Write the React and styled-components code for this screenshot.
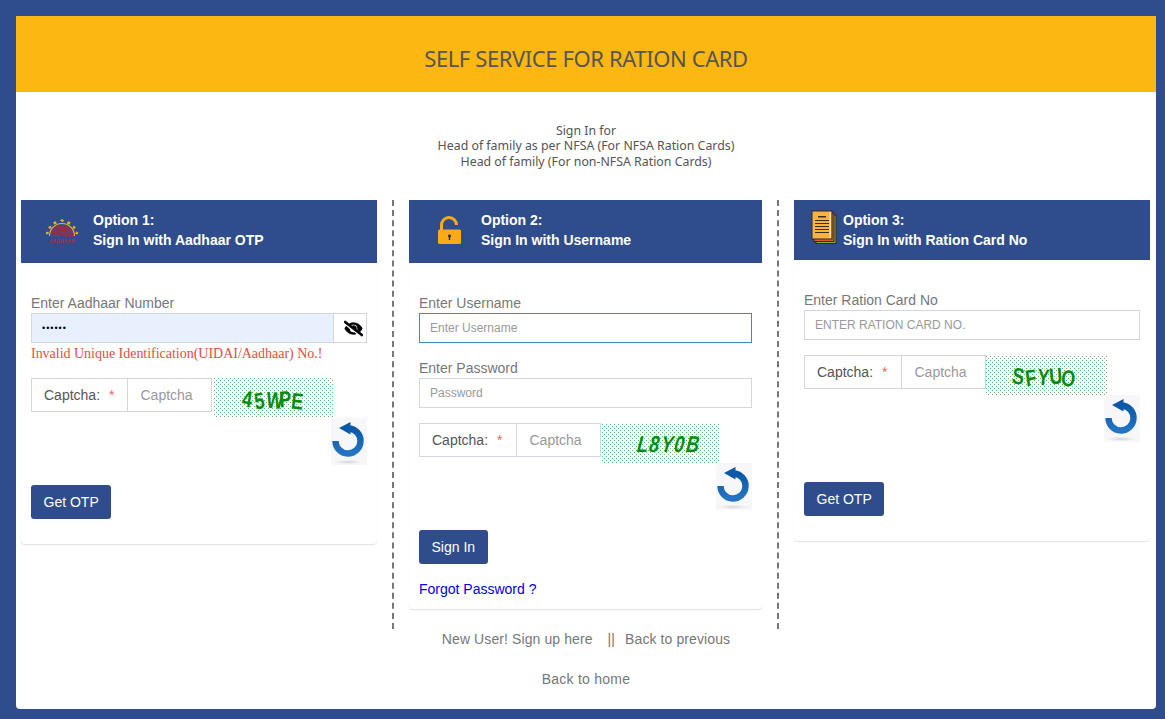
import React from "react";
import styled, { createGlobalStyle } from "styled-components";
import { FaEyeSlash } from "react-icons/fa";

const Global = createGlobalStyle`
  html, body { margin: 0; padding: 0; background: #2f4d8d; }
  * { box-sizing: border-box; }
  body { font-family: "Liberation Sans", Arial, sans-serif; }
`;

const Page = styled.div`
  width: 1165px;
  height: 719px;
  padding: 16px 9px 10px 16px;
  background: #2f4d8d;
  overflow: hidden;
`;
const Sheet = styled.main`
  height: 693px;
  background: #fff;
  border-radius: 0 0 4px 4px;
`;
const Banner = styled.header`
  height: 76px;
  background: #fcb711;
  display: flex;
  align-items: center;
  justify-content: center;
  padding-top: 8px;
`;
const Title = styled.h1`
  margin: 0;
  font: 400 22px/1 "Noto Sans", sans-serif;
  color: #555;
  letter-spacing: -0.4px;
`;
const Intro = styled.p`
  margin: 0;
  height: 108px;
  padding-top: 30.5px;
  text-align: center;
  font: 400 12.35px/15.5px "Noto Sans", sans-serif;
  color: #555;
`;
const Columns = styled.div`
  display: flex;
  height: 429px;
  padding-left: 5px;
`;
const Divider = styled.div`
  width: 2px;
  margin: 0 15px;
  border-left: 2px dashed #777;
`;
const Panel = styled.section`
  width: ${(p) => p.$w}px;
  align-self: flex-start;
  background: #fff;
  border-radius: 0 0 4px 4px;
  box-shadow: 0 1px 1px rgba(0, 0, 0, 0.12), 0 0 1px rgba(0, 0, 0, 0.03);
`;
const PanelHead = styled.div`
  height: ${(p) => p.$h}px;
  padding-bottom: ${(p) => p.$pb || 0}px;
  background: #2f4d8d;
  display: flex;
  align-items: center;
`;
const IconSlot = styled.div`
  width: ${(p) => p.$w}px;
  display: flex;
  padding-left: ${(p) => p.$pad}px;
  padding-top: ${(p) => p.$pt || 0}px;
  padding-bottom: ${(p) => p.$ib || 0}px;
  flex: none;
`;
const HeadText = styled.div`
  color: #fff;
  font-size: 14px;
  font-weight: 700;
  line-height: 20px;
`;
const PanelBody = styled.div`
  padding: 30px 10px 10px;
`;
const Field = styled.div`
  margin-bottom: 15px;
`;
const Label = styled.label`
  display: block;
  font-size: 14px;
  line-height: 20px;
  color: #777;
`;
const Input = styled.input`
  display: block;
  width: 100%;
  height: 30px;
  padding: 0 10px;
  border: 1px solid ${(p) => (p.$focus ? "#3c8dbc" : "#d2d6de")};
  background: #fff;
  font: 12px "Liberation Sans", Arial, sans-serif;
  color: #555;
  outline: none;
  &::placeholder { color: #999; opacity: 1; }
`;
const PassRow = styled.div`
  display: flex;
  height: 30px;
`;
const PassInput = styled(Input)`
  flex: 1;
  background: #e8f0fe;
  border-right: 0;
  color: #000;
  font-size: 9px;
  letter-spacing: 1px;
`;
const EyeBox = styled.div`
  width: 34px;
  border: 1px solid #d2d6de;
  display: flex;
  align-items: center;
  justify-content: center;
  padding-left: 6px;
  color: #000;
  font-size: 19px;
  svg { stroke: #000; stroke-width: 28; }
`;
const ErrorText = styled.div`
  height: 20px;
  padding-top: 1px;
  font: 14px/20px "Liberation Serif", serif;
  color: #e04f3f;
  letter-spacing: -0.02px;
`;
const CaptchaRow = styled.div`
  display: flex;
  flex-wrap: wrap;
  align-items: flex-start;
  margin-bottom: ${(p) => p.$after}px;
`;
const CaptchaGroup = styled.div`
  display: flex;
  width: ${(p) => p.$w}px;
  height: 34px;
  border: 1px solid #d2d6de;
  margin-right: ${(p) => p.$gap || 0}px;
  font-size: 14px;
`;
const CaptchaLabel = styled.div`
  flex: 1;
  padding-left: 12px;
  line-height: 32px;
  color: #555;
  border-right: 1px solid #d2d6de;
`;
const Star = styled.span`
  color: #f0655a;
  margin-left: 9px;
`;
const CaptchaInput = styled.input`
  flex: none;
  width: 83px;
  border: 0;
  padding: 0 12.5px;
  font: 14px "Liberation Sans", Arial, sans-serif;
  outline: none;
  background: transparent;
  &::placeholder { color: #999; opacity: 1; }
`;
const CaptchaImage = styled.div`
  position: relative;
  width: ${(p) => p.$w}px;
  height: 40px;
  display: flex;
  align-items: center;
  justify-content: center;
  padding: 4px ${(p) => p.$right || 0}px 0 ${(p) => p.$left || 0}px;
`;
const CaptchaDots = styled.svg`
  position: absolute;
  inset: 0;
  width: 100%;
  height: 100%;
`;
const CaptchaChar = styled.span`
  position: relative;
  display: inline-block;
  font: ${(p) => (p.$italic ? "italic 700" : "700")} 23px/1 "Liberation Sans", sans-serif;
  color: #0a8a14;
  width: 12.3px;
  text-align: center;
  transform: translateY(${(p) => p.$y}px) rotate(${(p) => p.$r}deg) scaleX(0.78)
    skewX(${(p) => (p.$italic ? -8 : 0)}deg);
`;
const RefreshBox = styled.div`
  width: 36px;
  height: 47px;
  margin-left: auto;
  background: #f7f7fa;
`;
const Button = styled.button`
  display: block;
  height: 34px;
  padding: 0 12.5px;
  margin-bottom: 15px;
  border: 0;
  border-radius: 3px;
  background: #2f4d8d;
  color: #fff;
  font: 14px "Liberation Sans", Arial, sans-serif;
`;
const ForgotLink = styled.a`
  display: block;
  font-size: 14px;
  line-height: 20px;
  color: #0000ee;
`;
const FooterRow = styled.div`
  display: flex;
  justify-content: center;
  font-size: 14px;
  line-height: 20px;
  color: #777;
  margin-bottom: 20px;
  letter-spacing: ${(p) => p.$ls}px;
`;
const Bars = styled.span`
  margin: 0 10px 0 15px;
`;

const AadhaarIcon = () => (
  <svg width="34" height="25" viewBox="0 0 34 25">
    <g fill="#f2b01e">
      <path d="M15 1.5l2-1.5 2.4 1.8-2.2 1.2z" />
      <path d="M8 3.2l2.8-1 1 2.6-2.4.8z" />
      <path d="M22.8 2.2l2.8 1-1.2 2.6-2.4-1z" />
      <path d="M3.2 8l2.4-1.2 1.2 2-2.4 1.2z" />
      <path d="M28.5 6.8l2.4 1.2-1.7 2.2-1.7-1.2z" />
      <path d="M0.8 13.5l2.4-1 .7 2.2-2.6.7z" />
      <path d="M31 12.5l2.4 1-1 1.9-2-.7z" />
    </g>
    <g fill="none" stroke="#b5263f" strokeWidth="1.2">
      <path d="M4.5 17a12.5 12.5 0 0 1 25 0" stroke="#f2b01e" />
      <path d="M6.5 17.5a10.5 10.5 0 0 1 21 0" />
      <path d="M8.5 17.5a8.5 8.5 0 0 1 17 0" />
      <path d="M10.5 17.5a6.5 6.5 0 0 1 13 0" />
      <path d="M12.5 17.5a4.5 4.5 0 0 1 9 0" />
      <path d="M14.5 17.5a2.5 2.5 0 0 1 5 0" />
    </g>
    <text x="17" y="24" textAnchor="middle" fontFamily="Liberation Sans" fontWeight="700" fontSize="5.2" fill="#b5263f">AADHAAR</text>
  </svg>
);
const LockIcon = () => (
  <svg width="23" height="28" viewBox="0 0 23 28">
    <path d="M3.5 14V9A7.5 7.5 0 0 1 18.5 9" fill="none" stroke="#fbab18" strokeWidth="3" />
    <rect x="0" y="13.5" width="23" height="14.5" rx="1.5" fill="#fbab18" />
    <circle cx="11.5" cy="20" r="1.4" fill="#222" />
    <rect x="10.8" y="20" width="1.4" height="4" fill="#222" />
  </svg>
);
const DocsIcon = () => (
  <svg width="26" height="34" viewBox="0 0 26 34">
    <rect x="5" y="5" width="20" height="28.5" fill="#7cb342" stroke="#2b2b2b" />
    <rect x="3" y="3" width="20" height="28.5" fill="#e4572e" stroke="#2b2b2b" />
    <rect x="1" y="1" width="20" height="28" fill="#fcb040" stroke="#2b2b2b" />
    <rect x="18.5" y="2" width="1.5" height="26" fill="#ffe0a0" />
    <g fill="#3a2e1a">
      <rect x="7" y="6" width="8" height="1.5" />
      <rect x="4" y="10" width="14" height="1" />
      <rect x="4" y="13" width="14" height="1" />
      <rect x="4" y="16" width="14" height="1" />
      <rect x="4" y="19" width="14" height="1" />
      <rect x="4" y="22" width="14" height="1" />
    </g>
  </svg>
);
const RefreshIcon = ({ id }) => (
  <RefreshBox>
    <svg width="36" height="47" viewBox="0 0 36 47" style={{ display: "block" }}>
      <defs>
        <linearGradient id={id} x1="0" y1="0" x2="0" y2="1">
          <stop offset="0" stopColor="#0c58a8" />
          <stop offset="1" stopColor="#2474c4" />
        </linearGradient>
        <radialGradient id={id + "s"}>
          <stop offset="0" stopColor="#000" stopOpacity="0.13" />
          <stop offset="1" stopColor="#000" stopOpacity="0" />
        </radialGradient>
      </defs>
      <ellipse cx="17.5" cy="44" rx="15" ry="2.2" fill={`url(#${id}s)`} />
      <path d="M18 10.5A12.5 12.5 0 1 1 4.5 23" fill="none" stroke={`url(#${id})`} strokeWidth="6.4" />
      <path d="M8 10L19.5 4V16.5Z" fill="#0c58a8" />
    </svg>
  </RefreshBox>
);
const CAPTCHA_MOTION = [
  [-1, 8], [1, -8], [0, 5], [-1, -5], [1, 6],
];
const Captcha = ({ id, text, w, italic, left, right, dotX = 0, dotY = 0 }) => (
  <CaptchaImage $w={w} $left={left} $right={right}>
    <CaptchaDots aria-hidden="true" shapeRendering="crispEdges">
      <defs>
        <pattern id={id + "d"} width="4" height="4" patternUnits="userSpaceOnUse" patternTransform={`translate(${dotX} ${dotY})`}>
          <rect x="0" y="0" width="1" height="1" fill="#5fbb6c" />
          <rect x="2" y="2" width="1" height="1" fill="#5fbb6c" />
        </pattern>
      </defs>
      <rect width="100%" height="100%" fill={`url(#${id}d)`} />
    </CaptchaDots>
    {text.split("").map((c, i) => (
      <CaptchaChar key={i} $italic={italic} $y={italic ? -1 : CAPTCHA_MOTION[i][0]} $r={italic ? 0 : CAPTCHA_MOTION[i][1]}>{c}</CaptchaChar>
    ))}
  </CaptchaImage>
);
const CaptchaBlock = ({ id, text, groupW, gap, imgW, italic, after, left, right, dotX, dotY }) => (
  <CaptchaRow $after={after}>
    <CaptchaGroup $w={groupW} $gap={gap}>
      <CaptchaLabel>Captcha:<Star>*</Star></CaptchaLabel>
      <CaptchaInput placeholder="Captcha" />
    </CaptchaGroup>
    <Captcha id={id} text={text} w={imgW} italic={italic} left={left} right={right} dotX={dotX} dotY={dotY} />
    <RefreshIcon id={id} />
  </CaptchaRow>
);

export default function App() {
  return (
    <Page>
      <Global />
      <Sheet>
        <Banner><Title>SELF SERVICE FOR RATION CARD</Title></Banner>
        <Intro>
          Sign In for<br />
          Head of family as per NFSA (For NFSA Ration Cards)<br />
          Head of family (For non-NFSA Ration Cards)
        </Intro>
        <Columns>
          <Panel $w={356}>
            <PanelHead $h={63} $pb={3}>
              <IconSlot $w={72} $pad={24} $pt={3}><AadhaarIcon /></IconSlot>
              <HeadText>Option 1:<br />Sign In with Aadhaar OTP</HeadText>
            </PanelHead>
            <PanelBody>
              <Field>
                <Label>Enter Aadhaar Number</Label>
                <PassRow>
                  <PassInput type="password" defaultValue="123456" />
                  <EyeBox><FaEyeSlash /></EyeBox>
                </PassRow>
                <ErrorText>Invalid Unique Identification(UIDAI/Aadhaar) No.!</ErrorText>
              </Field>
              <CaptchaBlock id="r1" text="45WPE" groupW={181} gap={2} imgW={120} after={20} right={5} />
              <Button>Get OTP</Button>
            </PanelBody>
          </Panel>
          <Divider />
          <Panel $w={353}>
            <PanelHead $h={63} $pb={3}>
              <IconSlot $w={72} $pad={29}><LockIcon /></IconSlot>
              <HeadText>Option 2:<br />Sign In with Username</HeadText>
            </PanelHead>
            <PanelBody>
              <Field>
                <Label>Enter Username</Label>
                <Input $focus placeholder="Enter Username" />
              </Field>
              <Field>
                <Label>Enter Password</Label>
                <Input placeholder="Password" />
              </Field>
              <CaptchaBlock id="r2" text="L8Y0B" groupW={182} imgW={119} italic after={20} left={12} dotX={1} dotY={1} />
              <Button>Sign In</Button>
              <ForgotLink>Forgot Password ?</ForgotLink>
            </PanelBody>
          </Panel>
          <Divider />
          <Panel $w={356}>
            <PanelHead $h={60}>
              <IconSlot $w={49} $pad={17} $ib={6}><DocsIcon /></IconSlot>
              <HeadText>Option 3:<br />Sign In with Ration Card No</HeadText>
            </PanelHead>
            <PanelBody>
              <Field>
                <Label>Enter Ration Card No</Label>
                <Input placeholder="ENTER RATION CARD NO." />
              </Field>
              <CaptchaBlock id="r3" text="SFYUO" groupW={182} imgW={121} after={40} right={9} dotY={1} />
              <Button>Get OTP</Button>
            </PanelBody>
          </Panel>
        </Columns>
        <FooterRow $ls={0.1}>
          New User! Sign up here<Bars>||</Bars>Back to previous
        </FooterRow>
        <FooterRow $ls={0.25}>Back to home</FooterRow>
      </Sheet>
    </Page>
  );
}
